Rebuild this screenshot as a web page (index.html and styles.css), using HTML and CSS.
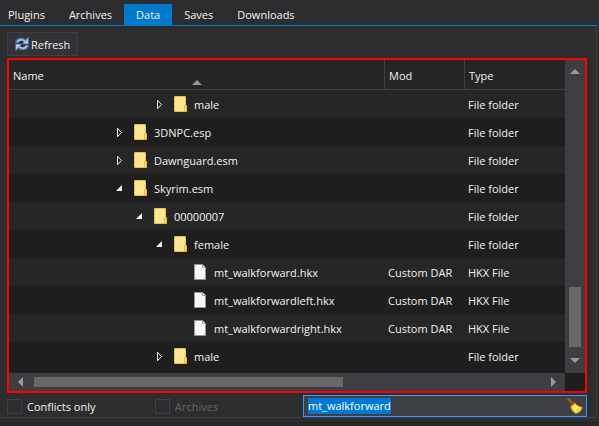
FILE: index.html
```html
<!DOCTYPE html>
<html lang="en">
<head>
<meta charset="utf-8">
<title>Data</title>
<link rel="stylesheet" href="styles.css">
</head>
<body>
<svg class="sprites" aria-hidden="true">
  <symbol id="folder" viewBox="0 0 16 16">
    <path d="M0.5 0.5h11v9h1v6h-12z" fill="#ffe596" stroke="#e9c03e"/>
    <path d="M10.5 15V9.5h2V15" fill="#ffe08a" stroke="#e9b92c"/>
  </symbol>
  <symbol id="file" viewBox="0 0 16 16">
    <path d="M0.5 0.5h8l3 3v12h-11z" fill="#f7f7f7" stroke="#909593"/>
    <path d="M8.5 0.5v3h3" fill="#fff" stroke="#909593"/>
  </symbol>
  <symbol id="closed" viewBox="0 0 16 16">
    <path d="M3.5 4.2v8.600L7.500 8.500z" fill="none" stroke="#f1f1f1"/>
  </symbol>
  <symbol id="open" viewBox="0 0 16 16">
    <path d="M8 5v6H2z" fill="#f8f8f8"/>
  </symbol>
</svg>

<main class="panel">
  <div class="tabs" role="tablist">
    <button class="tab" role="tab">Plugins</button>
    <button class="tab" role="tab">Archives</button>
    <button class="tab active" role="tab" aria-selected="true">Data</button>
    <button class="tab" role="tab">Saves</button>
    <button class="tab" role="tab">Downloads</button>
  </div>

  <div class="page">
    <button class="refresh">
      <svg class="icon" viewBox="0 0 16 16" aria-hidden="true">
        <path d="M2.5 7C3 3.5 8 1.5 11.500 5" fill="none" stroke="#3f6fa5" stroke-width="3.500"/>
        <path d="M14.500 1v7H8z" fill="#a6c9ea" stroke="#34618f" stroke-width="0.700"/>
        <path d="M13.500 9C13 12.500 8 14.500 4.500 11" fill="none" stroke="#3f6fa5" stroke-width="3.500"/>
        <path d="M1.500 15V8H8z" fill="#a6c9ea" stroke="#34618f" stroke-width="0.700"/>
        <path d="M3 6.500C4 3.800 8 2.600 11 5.300M13 9.500C12 12.200 8 13.400 5 10.700" fill="none" stroke="#a6c9ea" stroke-width="1.700"/>
      </svg>
      <span class="text">Refresh</span>
    </button>

    <div class="tree">
      <div class="view">
        <table>
          <colgroup><col class="col-name"><col class="col-mod"><col></colgroup>
          <thead>
            <tr>
              <th><div class="sorted">Name
                <svg class="sort" viewBox="0 0 10 5" aria-hidden="true"><path d="M0 5L5 0l5 5z"/></svg></div></th>
              <th>Mod</th>
              <th>Type</th>
            </tr>
          </thead>
          <tbody>
            <tr><td><div class="node depth-2"><button class="twisty" aria-label="Expand male"><svg class="icon"><use href="#closed"/></svg></button><svg class="icon"><use href="#folder"/></svg><span class="text">male</span></div></td><td></td><td>File folder</td></tr>
            <tr><td><div class="node"><button class="twisty" aria-label="Expand 3DNPC.esp"><svg class="icon"><use href="#closed"/></svg></button><svg class="icon"><use href="#folder"/></svg><span class="text">3DNPC.esp</span></div></td><td></td><td>File folder</td></tr>
            <tr><td><div class="node"><button class="twisty" aria-label="Expand Dawnguard.esm"><svg class="icon"><use href="#closed"/></svg></button><svg class="icon"><use href="#folder"/></svg><span class="text">Dawnguard.esm</span></div></td><td></td><td>File folder</td></tr>
            <tr><td><div class="node"><button class="twisty" aria-label="Collapse Skyrim.esm"><svg class="icon"><use href="#open"/></svg></button><svg class="icon"><use href="#folder"/></svg><span class="text">Skyrim.esm</span></div></td><td></td><td>File folder</td></tr>
            <tr><td><div class="node depth-1"><button class="twisty" aria-label="Collapse 00000007"><svg class="icon"><use href="#open"/></svg></button><svg class="icon"><use href="#folder"/></svg><span class="text">00000007</span></div></td><td></td><td>File folder</td></tr>
            <tr><td><div class="node depth-2"><button class="twisty" aria-label="Collapse female"><svg class="icon"><use href="#open"/></svg></button><svg class="icon"><use href="#folder"/></svg><span class="text">female</span></div></td><td></td><td>File folder</td></tr>
            <tr><td><div class="node depth-4"><svg class="icon"><use href="#file"/></svg><span class="text">mt_walkforward.hkx</span></div></td><td>Custom DAR</td><td>HKX File</td></tr>
            <tr><td><div class="node depth-4"><svg class="icon"><use href="#file"/></svg><span class="text">mt_walkforwardleft.hkx</span></div></td><td>Custom DAR</td><td>HKX File</td></tr>
            <tr><td><div class="node depth-4"><svg class="icon"><use href="#file"/></svg><span class="text">mt_walkforwardright.hkx</span></div></td><td>Custom DAR</td><td>HKX File</td></tr>
            <tr><td><div class="node depth-2"><button class="twisty" aria-label="Expand male"><svg class="icon"><use href="#closed"/></svg></button><svg class="icon"><use href="#folder"/></svg><span class="text">male</span></div></td><td></td><td>File folder</td></tr>
          </tbody>
        </table>
      </div>
      <div class="scroll vertical">
        <svg class="arrow" viewBox="0 0 10 10"><path d="M0 8L5 3l5 5z"/></svg>
        <div class="track"><div class="thumb"></div></div>
        <svg class="arrow" viewBox="0 0 10 10"><path d="M0 2L5 7l5-5z"/></svg>
      </div>
      <div class="scroll horizontal">
        <svg class="arrow" viewBox="0 0 10 10"><path d="M8 0L3 5l5 5z"/></svg>
        <div class="track"><div class="thumb"></div></div>
        <svg class="arrow" viewBox="0 0 10 10"><path d="M2 0L7 5l-5 5z"/></svg>
      </div>
    </div>

    <div class="filters">
      <label class="check"><input type="checkbox"><span class="text">Conflicts only</span></label>
      <label class="check off"><input type="checkbox" disabled><span class="text">Archives</span></label>
      <div class="search">
        <input id="filter" type="text" aria-label="Filter" value="mt_walkforward" spellcheck="false">
        <button class="clear" aria-label="Clear filter">
          <svg class="icon" viewBox="0 0 16 16">
            <path d="M1.500 1L6 6" stroke="#9a5a18" stroke-width="2.500" stroke-linecap="round"/>
            <path d="M7.500 4.500C9 7 12 8 15.500 9.500C14 13 12 15.500 8.500 15.500C5.500 14 4 11 3.500 8z" fill="#ead93e" stroke="#9b8420" stroke-width="0.800"/>
            <path d="M8 7.500l3 3M6.500 9l3 3.500" stroke="#fff79a" stroke-width="1.300"/>
            <path d="M3.500 8L7.500 4.500" stroke="#b52a20" stroke-width="1.600"/>
          </svg>
        </button>
      </div>
    </div>
  </div>
</main>
<script src="main.js"></script>
</body>
</html>
```
FILE: styles.css
```css
* { box-sizing: border-box; }

body {
  margin: 0;
  min-height: 100vh;
  display: flex;
  flex-direction: column;
  background: #2d2d30;
  color: #f1f1f1;
  font: 11px/16px "Open Sans", "Noto Sans", sans-serif;
}

body::after {
  content: "";
  flex: 1;
  margin-top: 4px;
  border-top: 1px solid #222224;
  background: #29292b;
}

button, input {
  margin: 0;
  padding: 0;
  border: 0;
  background: none;
  color: inherit;
  font: inherit;
}

svg { display: block; flex: none; }
.sprites { position: absolute; width: 0; height: 0; }
.icon { width: 16px; height: 16px; }
.text { padding-top: 2px; }

.panel {
  display: flex;
  flex-direction: column;
  margin-right: 2px;
}

.tabs {
  display: flex;
  padding-top: 4px;
  border-bottom: 1px solid #007acc;
}

.tab { height: 21px; padding: 1px 12px 0; }
.tab:first-child { padding-left: 8px; }
.tab.active { background: #007acc; }

.page {
  display: flex;
  flex-direction: column;
  padding: 6px 9px 0 7px;
  border: solid #3f3f46;
  border-width: 0 1px 1px 0;
}

.refresh {
  display: flex;
  align-items: center;
  align-self: flex-start;
  gap: 1px;
  height: 24px;
  margin-bottom: 2px;
  padding: 0 7px 0 6px;
  border: 1px solid #3f3f46;
  background: #333337;
}

.tree {
  display: grid;
  grid-template-columns: 1fr 20px;
  grid-template-rows: 313px 18px;
  border: 2px solid #f00;
  background: #1e1e1e;
}

.view { overflow: hidden; }

table {
  width: 100%;
  table-layout: fixed;
  border-collapse: separate;
  border-spacing: 0;
}

.col-name { width: 376px; }
.col-mod { width: 80px; }

th {
  height: 30px;
  padding: 2px 4px 0;
  border: solid #3f3f46;
  border-width: 0 1px 1px 0;
  background: #252526;
  font-weight: 400;
  text-align: left;
}

th:last-child { border-right: 0; }
.sorted { position: relative; }
.sort {
  position: absolute;
  left: 50%;
  bottom: -1px;
  width: 10px;
  height: 5px;
  margin-left: -5px;
  fill: #999;
}

td { height: 28px; padding: 2px 3px 0; }
td:first-child { padding: 0 0 0 105px; }
tbody tr:nth-child(odd) { background: #262626; }

.node { display: flex; align-items: center; gap: 4px; }
.depth-1 { padding-left: 20px; }
.depth-2 { padding-left: 40px; }
.depth-4 { padding-left: 80px; }

.scroll {
  display: flex;
  align-items: center;
  background: #3e3e42;
}

.vertical { flex-direction: column; padding: 6px 0 7px; gap: 9px; }
.horizontal { padding: 0 6px; gap: 9px; }
.arrow { width: 10px; height: 10px; fill: #999; }
.track { flex: 1; display: flex; }
.thumb { background: #686868; }
.vertical .track { align-items: flex-end; }
.vertical .thumb { width: 12px; height: 23%; }
.horizontal .thumb { width: 61%; height: 10px; }

.filters {
  display: flex;
  align-items: center;
  padding-top: 2px;
}

.check { display: flex; align-items: center; gap: 5px; width: 148px; }
.check.off { color: #656565; }
.check input {
  appearance: none;
  width: 15px;
  height: 15px;
  border: 1px solid #3f3f46;
}

.search {
  flex: 1;
  display: flex;
  align-items: center;
  height: 22px;
  padding: 0 3px 0 4px;
  border: 1px solid #3399ff;
  background: #3f3f46;
}

.search input { flex: 1; min-width: 0; outline: 0; }
.search input::selection { background: #0078d7; color: #fff; }
```
FILE: main.js
```js
document.getElementById("filter").select();
```
